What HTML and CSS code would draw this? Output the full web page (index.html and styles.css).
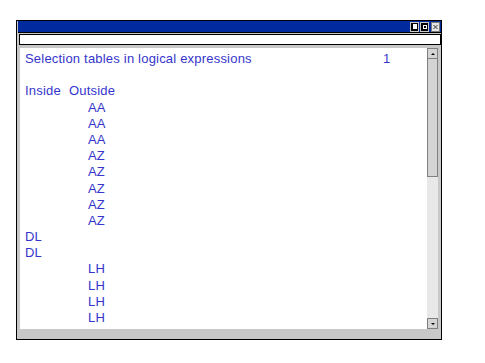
FILE: index.html
```html
<!DOCTYPE html>
<html lang="en">
<head>
  <meta charset="UTF-8" />
  <title>Selection tables</title>
  <link rel="stylesheet" href="styles.css">
</head>
<body>
  <div class="janela">
    <div class="titulo">
      <span class="botao">
        <svg width="9" height="10" viewBox="0 0 9 10"><rect x="0" y="0" width="9" height="10" fill="#c8c8c8"/><rect x="1" y="1" width="7" height="8" fill="#000"/><rect x="3" y="2" width="4" height="5" fill="#fff"/></svg>
      </span>
      <span class="botao">
        <svg width="9" height="10" viewBox="0 0 9 10"><rect x="0" y="0" width="9" height="10" fill="#c8c8c8"/><rect x="1" y="1" width="7" height="8" fill="#000"/><rect x="3" y="3" width="4" height="4" fill="#fff"/><rect x="4" y="4" width="2" height="2" fill="#000"/></svg>
      </span>
      <span class="botao fechar">
        <svg width="9" height="10" viewBox="0 0 9 10"><rect x="0.5" y="0.5" width="8" height="9" fill="#e4e4e4" stroke="#7a7a7a"/><path d="M2.5 3 L6.5 7 M6.5 3 L2.5 7" stroke="#333" stroke-width="1"/></svg>
      </span>
    </div>
    <div class="campo"></div>
    <div class="area">
      <div class="texto">
        <div class="linha"><span class="cab">Selection tables in logical expressions</span><span>1</span></div>
        <div class="linha"></div>
        <div class="linha"><span class="col1">Inside</span><span>Outside</span></div>
        <div class="linha"><span class="fora">AA</span></div>
        <div class="linha"><span class="fora">AA</span></div>
        <div class="linha"><span class="fora">AA</span></div>
        <div class="linha"><span class="fora">AZ</span></div>
        <div class="linha"><span class="fora">AZ</span></div>
        <div class="linha"><span class="fora">AZ</span></div>
        <div class="linha"><span class="fora">AZ</span></div>
        <div class="linha"><span class="fora">AZ</span></div>
        <div class="linha"><span>DL</span></div>
        <div class="linha"><span>DL</span></div>
        <div class="linha"><span class="fora">LH</span></div>
        <div class="linha"><span class="fora">LH</span></div>
        <div class="linha"><span class="fora">LH</span></div>
        <div class="linha"><span class="fora">LH</span></div>
      </div>
      <div class="rolagem">
        <div class="seta"><span class="seta-cima"></span></div>
        <div class="polegar"></div>
        <div class="trilho"></div>
        <div class="seta"><span class="seta-baixo"></span></div>
      </div>
    </div>
  </div>
</body>
</html>
```

FILE: styles.css
```css
body {
  margin: 0;
  background-color: #fff;
  font-family: "Liberation Sans", Arial, sans-serif;
}

.janela {
  box-sizing: border-box;
  width: 426px;
  height: 320px;
  margin: 20px 0 0 16px;
  border: 1px solid #000;
  background-color: #c8c8c8;
  padding: 0 0 10px 1px;
  display: flex;
  flex-direction: column;
}

.titulo {
  height: 11px;
  border-bottom: 1px solid #000;
  background-color: #022a9f;
  display: flex;
  justify-content: flex-end;
  align-items: center;
  gap: 1px;
  padding-right: 1px;
}

.botao {
  display: block;
  width: 9px;
  height: 10px;
}

.botao svg {
  display: block;
}

.fechar {
  margin-left: 1px;
}

.campo {
  box-sizing: border-box;
  height: 11px;
  margin: 1px 0 3px 1px;
  border: 1px solid #000;
  background-color: #fff;
}

.area {
  flex: 1;
  display: flex;
  min-height: 0;
  margin-left: 2px;
  margin-right: 3px;
}

.texto {
  flex: 1;
  background-color: #fff;
  padding: 3px 0 0 5px;
  overflow: hidden;
  color: #3535cc;
  font-size: 13px;
  letter-spacing: 0.2px;
}

.linha {
  display: flex;
  height: 16.2px;
  line-height: 16.2px;
  white-space: nowrap;
}

.cab {
  width: 358px;
}

.col1 {
  width: 44px;
}

.fora {
  margin-left: 63px;
}

.rolagem {
  width: 11px;
  display: flex;
  flex-direction: column;
  background-color: #e8e8e8;
}

.seta {
  box-sizing: border-box;
  height: 11px;
  border: 1px solid #808080;
  background-color: #d4d4d4;
  display: flex;
  align-items: center;
  justify-content: center;
}

.seta-cima, .seta-baixo {
  width: 0;
  height: 0;
  border-left: 2px solid transparent;
  border-right: 2px solid transparent;
}

.seta-cima {
  border-bottom: 2px solid #000;
}

.seta-baixo {
  border-top: 2px solid #000;
}

.polegar {
  box-sizing: border-box;
  height: 118px;
  border: 1px solid #808080;
  border-top: none;
  background-color: #d4d4d4;
}

.trilho {
  flex: 1;
}
```
